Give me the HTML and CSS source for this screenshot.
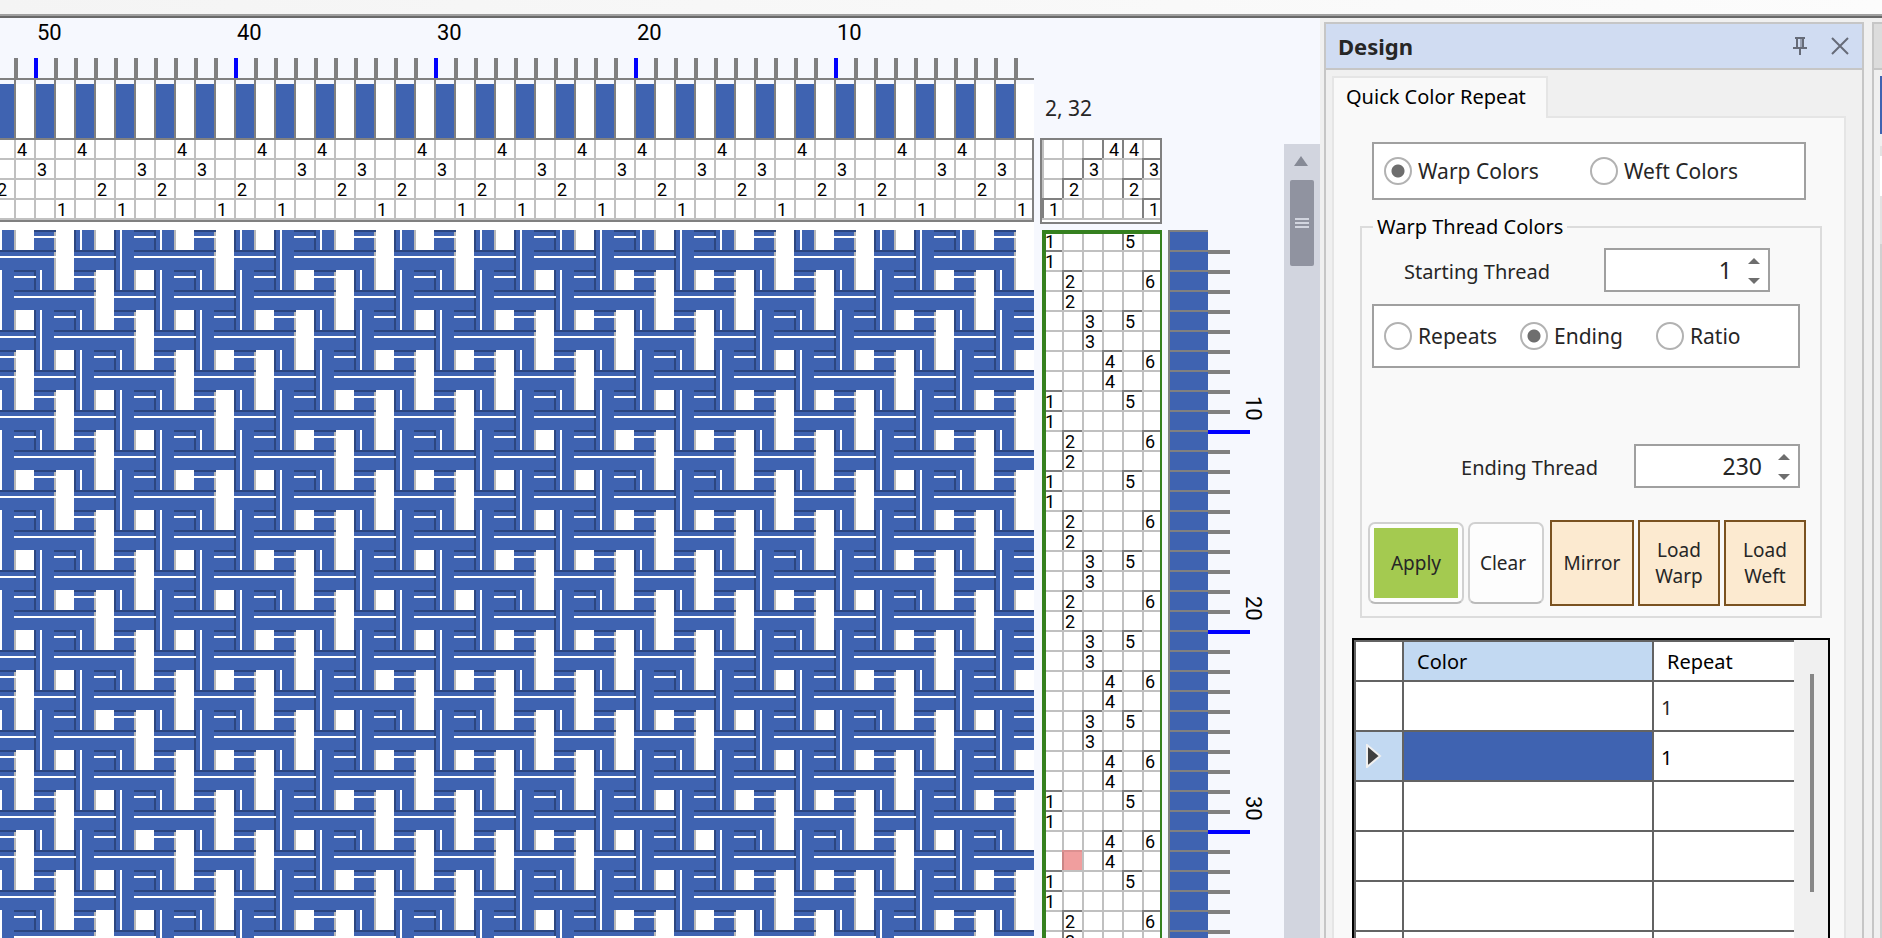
FILE: index.html
```
<!DOCTYPE html>
<html lang="en">
<head>
<meta charset="utf-8">
<title>Weaving draft</title>
<link rel="stylesheet" href="styles.css">
</head>
<body>
<div class="toolbar-edge"></div>
<main class="main">
  <section class="workspace" aria-label="Draft">
    <svg class="draft" id="draft" width="1284" height="920" viewBox="0 18 1284 920" shape-rendering="crispEdges"></svg>
    <div class="scrollbar">
      <svg class="scroll-up" width="14" height="10" viewBox="0 0 14 10"><path d="M7 0L14 10H0Z"/></svg>
      <div class="scroll-thumb"><i></i><i></i><i></i></div>
    </div>
  </section>

  <aside class="panel">
    <header class="panel-head">
      <h1 class="panel-title">Design</h1>
      <button class="head-btn" aria-label="Pin"><svg width="14" height="18" viewBox="0 0 14 18" fill="none" stroke="#666b78" stroke-width="2"><path d="M2 1H12M4 1V10M10 1V10M0 11H14M7 11V18"/><path d="M8 2V10" stroke="#9aa2b4"/></svg></button>
      <button class="head-btn" aria-label="Close"><svg width="18" height="18" viewBox="0 0 18 18" fill="none" stroke="#666b78" stroke-width="2"><path d="M1 1L17 17M17 1L1 17"/></svg></button>
    </header>
    <div class="panel-body">
      <button class="tab">Quick Color Repeat</button>
      <div class="page">
        <div class="choices kind">
          <label><input type="radio" name="kind" checked>Warp Colors</label>
          <label><input type="radio" name="kind">Weft Colors</label>
        </div>
        <fieldset class="group">
          <legend>Warp Thread Colors</legend>
          <div class="field start">
            <label for="start">Starting Thread</label>
            <div class="spin"><input id="start" type="text" value="1"><span class="arrows"><button aria-label="Increase start"><svg width="12" height="6" viewBox="0 0 12 6"><path d="M6 0L12 6H0Z"/></svg></button><button aria-label="Decrease start"><svg width="12" height="6" viewBox="0 0 12 6"><path d="M0 0H12L6 6Z"/></svg></button></span></div>
          </div>
          <div class="choices mode">
            <label><input type="radio" name="mode">Repeats</label>
            <label><input type="radio" name="mode" checked>Ending</label>
            <label><input type="radio" name="mode">Ratio</label>
          </div>
          <div class="field end">
            <label for="end">Ending Thread</label>
            <div class="spin"><input id="end" type="text" value="230"><span class="arrows"><button aria-label="Increase end"><svg width="12" height="6" viewBox="0 0 12 6"><path d="M6 0L12 6H0Z"/></svg></button><button aria-label="Decrease end"><svg width="12" height="6" viewBox="0 0 12 6"><path d="M0 0H12L6 6Z"/></svg></button></span></div>
          </div>
          <div class="actions">
            <button class="btn soft apply"><span>Apply</span></button>
            <button class="btn soft clear">Clear</button>
            <button class="btn tan mirror">Mirror</button>
            <button class="btn tan">Load Warp</button>
            <button class="btn tan">Load Weft</button>
          </div>
        </fieldset>
        <div class="grid">
          <table class="colors">
            <thead><tr><th class="rowhead"></th><th class="color-head">Color</th><th class="repeat">Repeat</th></tr></thead>
            <tbody>
              <tr><td></td><td></td><td>1</td></tr>
              <tr class="current"><td><svg width="16" height="24" viewBox="0 0 16 24"><path d="M1 1L14 12L1 23Z" fill="#3f3f3f" stroke="#f0f0f0" stroke-width="2"/></svg></td><td class="swatch"></td><td>1</td></tr>
              <tr><td></td><td></td><td></td></tr>
              <tr><td></td><td></td><td></td></tr>
              <tr><td></td><td></td><td></td></tr>
              <tr><td></td><td></td><td></td></tr>
            </tbody>
          </table>
          <div class="grid-scroll"><div class="grid-thumb"></div></div>
        </div>
      </div>
    </div>
  </aside>

  <aside class="next-panel">
    <div class="next-head"></div>
    <div class="next-body"><div class="chip"></div><div class="strip"></div></div>
  </aside>
</main>
<script src="draft.js"></script>
</body>
</html>
```
FILE: styles.css
```
* { box-sizing: border-box; }
body {
  margin: 0;
  height: 100vh;
  display: flex;
  flex-direction: column;
  overflow: hidden;
  background: #f0f0f0;
  color: #262626;
  font: 20px/26px "Noto Sans", "Open Sans", sans-serif;
}
button, input { font: inherit; color: inherit; }
button { padding: 0; border: 0; background: none; }
.toolbar-edge {
  flex: none;
  height: 18px;
  background: linear-gradient(90deg, #f4f4f4, #fcfcfc);
  border-bottom: 2px solid #696969;
  box-shadow: inset 0 -2px #a0a0a0;
}
.main { flex: 1; min-height: 0; display: flex; overflow: hidden; }

.workspace { flex: 1; min-width: 0; display: flex; justify-content: flex-end; background: #f6f8fe; overflow: hidden; }
.draft { flex: none; display: block; }
.draft text { font-family: Roboto, sans-serif; fill: #000; }
.draft .num { font-size: 18px; }
.draft .mark { font-size: 22px; }
.draft .cursor { font-family: "Noto Sans", sans-serif; font-size: 21px; fill: #262626; }
.scrollbar { flex: none; width: 36px; margin-top: 126px; padding-top: 12px; background: #d2d5df; }
.scroll-up { display: block; margin: 0 10px; fill: #868a96; }
.scroll-thumb {
  width: 24px; height: 86px; margin: 14px 6px 0;
  display: flex; flex-direction: column; align-items: center; justify-content: center; gap: 2px;
  background: #9093a0; border-radius: 2px;
}
.scroll-thumb i { width: 14px; height: 2px; background: #d2d5df; }

.panel { flex: none; width: 540px; margin: 4px 8px 0 4px; display: flex; flex-direction: column; border: solid #c6c6c6; border-width: 2px 2px 0; }
.panel-head { flex: none; display: flex; align-items: center; gap: 24px; height: 46px; padding: 0 13px 0 12px; background: #d0dcf2; border-bottom: 2px solid #c6c6c6; }
.panel-title { flex: 1; margin: 0; font-size: 22px; font-weight: 700; }
.head-btn svg { display: block; }
.panel-body { flex: 1; min-height: 0; padding: 6px 16px 0 6px; }
.tab { display: block; position: relative; z-index: 1; width: 216px; height: 42px; padding: 0 0 2px 12px; text-align: left; background: #f9f9f9; border: solid #e5e5e5; border-width: 2px 2px 0; color: #000; }
.page { margin-top: -2px; height: 100%; border: 2px solid #e5e5e5; background: #f9f9f9; overflow: hidden; }

.choices { display: flex; align-items: center; background: #fff; border: 2px solid #a0a0a0; padding-left: 10px; }
.choices label { display: flex; align-items: center; gap: 6px; font-size: 21px; }
.choices input {
  appearance: none; width: 28px; height: 28px; margin: 0;
  border: 2px solid #b2b2b2; border-radius: 50%; background: #fff;
}
.choices input:checked { background: radial-gradient(circle, #6e6e6e 6px, #fff 7px); }
.kind { height: 58px; margin: 24px 38px 0; gap: 50px; }
.kind label { width: 156px; }
.group { min-width: 0; margin: 13px 22px 0 26px; padding: 7px 14px 10px 6px; border: 2px solid #dcdcdc; }
.group legend { margin-left: 5px; padding: 0 4px; line-height: 28px; color: #000; }
.field { display: flex; align-items: center; justify-content: flex-end; }
.field label { padding-top: 3px; }
.spin { display: flex; width: 166px; height: 44px; padding-right: 8px; background: #fff; border: 2px solid #a0a0a0; }
.spin input { flex: 1; min-width: 0; padding: 0 16px 0 0; border: 0; background: none; text-align: right; font-size: 23px; outline: 0; }
.arrows { display: flex; flex-direction: column; justify-content: center; gap: 14px; padding-top: 2px; }
.arrows button { height: 6px; line-height: 0; }
.arrows svg { display: block; fill: #6e6e6e; }
.start { gap: 54px; padding-right: 36px; }
.mode { height: 64px; margin: 12px 6px 0 4px; }
.mode label { width: 136px; }
.end { gap: 36px; margin-top: 76px; padding-right: 6px; }
.actions { display: flex; align-items: center; margin-top: 32px; gap: 4px; }
.btn { height: 86px; font-size: 19px; }
.soft { height: 82px; border: 2px solid #d0d0d0; border-bottom-color: #bababa; border-radius: 7px; background: #fdfdfd; }
.apply { width: 96px; padding: 4px; }
.apply span { display: flex; height: 70px; align-items: center; justify-content: center; background: #a4ca50; }
.clear { width: 76px; margin-right: 2px; padding-right: 6px; }
.tan { width: 82px; padding: 0 12px; border: 2px solid #7a5220; background: #fcead0; }
.tan + .tan { flex: 1; }
.mirror { width: 84px; padding: 0; }

.grid { display: flex; align-items: flex-start; height: 360px; margin: 20px 14px 0 18px; border: 2px solid #000; background: #fff; }
.colors { flex: 1; border-collapse: collapse; table-layout: fixed; border: solid #636363; border-width: 2px 0 0 2px; color: #262626; }
.colors th, .colors td { height: 50px; border: 2px solid #636363; border-right: 0; padding: 4px 0 0 7px; text-align: left; font-weight: 400; }
.colors th { height: 40px; padding: 2px 0 0 13px; color: #000; }
.colors .rowhead { width: 48px; }
.colors .color-head { width: 250px; background: #c2d9f2; }
.colors .current td:first-child { background: #c2d9f2; padding: 0 0 0 10px; }
.colors .current .swatch { background: #3f63b1; }
.colors .current td:last-child { color: #000; }
.colors svg { display: block; }
.grid-scroll { flex: none; align-self: stretch; width: 34px; padding: 34px 14px 0 16px; background: #f0f0f0; }
.grid-thumb { width: 4px; height: 218px; background: #878787; }

.next-panel { flex: none; width: 10px; margin-top: 4px; border: solid #c6c6c6; border-width: 2px 0 0 2px; }
.next-head { height: 46px; background: #dcdcdc; border-bottom: 2px solid #c6c6c6; }
.next-body { padding: 6px 0 0 6px; }
.chip { height: 58px; background: #3f63b1; }
.strip { height: 800px; margin-top: 12px; background: linear-gradient(#e2e2e2 10px, #fff 10px 50px, #e2e2e2 50px 98px, #d0d0d0 98px); }
```
FILE: draft.js
```
const BLUE = '#3f63b1', SHADE = '#2c4680', DARK = '#808080', LIGHT = '#c0c0c0';
const CELL = 20, RIGHT = 1034, TOP = 230, ROWS = 36;

// Shaft of each warp thread, from the right edge to the left.
const threading = [1,3,2,4,3,1,4,2,1,3,2,4,1,3,2,4,3,1,2,4,3,1,4,2,3,1,4,2,1,3,4,2,1,3,2,4,3,1,4,2,1,3,4,2,3,1,2,4,1,3,4,2];
// Shafts lifted by each treadle.
const tieup = [[1],[2],[3],[4],[2,4],[1,3]];
// Main treadle of each pair of picks; the odd pick also takes treadle 5 or 6.
const pairs = [1,2,3,4,1,2,1,2,3,2,3,4,3,4,1,4,1,2];

const out = [];
const rect = (x, y, w, h, fill) => out.push(`<rect x="${x}" y="${y}" width="${w}" height="${h}" fill="${fill}"/>`);
const text = (x, y, s, cls, extra = '') => out.push(`<text x="${x}" y="${y}" class="${cls}" ${extra}>${s}</text>`);
const left = n => RIGHT - CELL * n;

const picks = [];
for (let r = 0; r < ROWS; r++) {
  const t = [pairs[r >> 1]];
  if (r % 2 === 0) t.push((r >> 1) % 2 ? 6 : 5);
  picks.push(t);
}

// Ruler and warp colours
rect(0, 138, RIGHT, 800, '#fff');
threading.forEach((shaft, i) => {
  const n = i + 1, x = left(n);
  rect(x, 84, CELL, 54, n % 2 ? '#fff' : BLUE);
  rect(x, 80, 2, 58, DARK);
  rect(x, 58, 4, 20, n % 10 ? DARK : '#00f');
  if (n % 10 === 0) text(x + 3, 40, n, 'mark');
});
rect(0, 78, RIGHT, 2, DARK);
rect(0, 138, RIGHT, 2, DARK);

// Threading
threading.forEach((shaft, i) => rect(left(i + 1), 140, 2, 80, LIGHT));
for (let k = 1; k <= 4; k++) rect(0, 138 + CELL * k, RIGHT, 2, LIGHT);
rect(0, 220, RIGHT, 2, DARK);
rect(RIGHT - 2, 138, 2, 84, DARK);
threading.forEach((shaft, i) => text(left(i + 1) + 3, 156 + CELL * (4 - shaft), shaft, 'num'));

// Cloth
picks.forEach((treadles, r) => {
  const y = TOP + CELL * r;
  const lifted = new Set(treadles.flatMap(t => tieup[t - 1]));
  threading.forEach((shaft, i) => {
    if (!lifted.has(shaft)) return;
    const x = left(i + 1);
    if ((i + 1) % 2) {
      rect(x, y, CELL, CELL, '#fff');
      rect(x, y, 2, CELL, '#b8b8b8');
    } else {
      rect(x, y, CELL, CELL, BLUE);
      rect(x, y, 2, CELL, SHADE);
      rect(x + 6, y, 2, CELL, '#fff');
    }
  });
  threading.forEach((shaft, i) => {
    if (lifted.has(shaft)) return;
    const x = left(i + 1), w = i ? CELL + 2 : CELL;
    rect(x, y, CELL, CELL, BLUE);
    rect(x, y, w, 2, SHADE);
    rect(x, y + 6, w, 2, '#fff');
  });
});

// Tie-up
rect(1040, 138, 122, 86, '#fff');
for (let c = 0; c < 6; c++) rect(1042 + CELL * c, 140, 2, 80, LIGHT);
for (let k = 1; k <= 4; k++) rect(1042, 138 + CELL * k, 120, 2, LIGHT);
tieup.forEach((shafts, c) => shafts.forEach(s => {
  const x = 1042 + CELL * c, y = 138 + CELL * (4 - s);
  rect(x, y, 2, CELL, DARK);
  rect(x, y, CELL, 2, DARK);
  text(x + 7, y + 18, s, 'num');
}));
out.push(`<rect x="1041" y="139" width="120" height="84" fill="none" stroke="${DARK}" stroke-width="2"/>`);
text(1045, 116, '2, 32', 'cursor');

// Treadling
rect(1042, TOP, 120, 720, '#fff');
for (let c = 1; c < 6; c++) rect(1042 + CELL * c, TOP, 2, 720, LIGHT);
picks.forEach((t, r) => rect(1042, TOP + CELL * r, 120, 2, LIGHT));
rect(1062, 850, 20, 20, '#f09e9e');
rect(1062, 850, 2, 20, '#c98585');
rect(1062, 850, 20, 2, '#dc9090');
picks.forEach((treadles, r) => treadles.forEach(t => {
  const x = 1042 + CELL * (t - 1), y = TOP + CELL * r;
  rect(x, y, 2, CELL, DARK);
  rect(x, y, CELL, 2, DARK);
  text(x + 3, y + 18, t, 'num');
}));
rect(1042, TOP, 4, 720, '#35801f');
rect(1042, TOP, 120, 4, '#35801f');
rect(1160, TOP, 2, 720, '#35801f');

// Weft colours and ruler
rect(1168, TOP, 40, 720, BLUE);
rect(1168, TOP, 2, 720, DARK);
for (let r = 0; r < ROWS; r++) {
  const y = TOP + CELL * r;
  rect(1168, y, 40, 2, DARK);
  if (!r) continue;
  if (r % 10) rect(1208, y, 22, 4, DARK);
  else {
    rect(1208, y, 42, 4, '#00f');
    text(0, 0, r, 'mark', `transform="translate(1246 ${y - 34}) rotate(90)"`);
  }
}
document.getElementById('draft').innerHTML = out.join('');
```
